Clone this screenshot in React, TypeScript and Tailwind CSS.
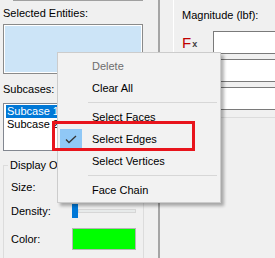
import React from 'react';

const Slider = () => (
  <div className="flex items-center w-[64px] h-[14px]">
    <div className="w-[6px] h-[14px] bg-[#0078d7]" />
    <div className="flex-1 h-[4px] bg-[#e7eaea] border border-[#d6d6d6]" />
  </div>
);

const ForceRow = ({ axis }: { axis: string }) => (
  <div className="flex items-center h-[23px]">
    <div className="w-[31px] flex items-end leading-none">
      <span className="text-[15px] text-[#c00000]">F</span>
      <span className="text-[9px] font-bold text-[#404040] ml-[1px] mb-[1px]">{axis}</span>
    </div>
    <div className="w-[80px] h-[23px] bg-white border border-[#7a7a7a]" />
  </div>
);

const MenuItem = ({ label, disabled, checked }: { label: string; disabled?: boolean; checked?: boolean }) => (
  <div className={`flex items-center h-[22px] ${disabled ? 'text-[#6d6d6d]' : 'text-black'}`}>
    <div className={`ml-[2px] w-[22px] h-[21px] flex items-center justify-center ${checked ? 'bg-[#90c8f6]' : ''}`}>
      {checked && (
        <svg width="12" height="9" viewBox="0 0 12 9">
          <polyline points="1,4.5 4,7.5 11,1" fill="none" stroke="#333" strokeWidth="1.3" />
        </svg>
      )}
    </div>
    <span className="ml-[10px]">{label}</span>
  </div>
);

const Separator = () => (
  <div className="h-[7px] flex items-center pl-[30px] pr-[3px]">
    <div className="h-px w-full bg-[#d7d7d7]" />
  </div>
);

export default function App() {
  return (
    <div className="relative w-[275px] h-[258px] overflow-hidden bg-[#f0f0f0] flex items-start font-['Liberation_Sans',Arial,sans-serif] text-[11px] text-black">
      {/* panneau gauche */}
      <div className="w-[160px] h-[258px] shrink-0 border-r-2 border-[#a5a5a5]">
        <div className="ml-[13px] w-[130px] h-px bg-[#a0a0a0]" />
        <div className="pl-[3px] mt-[5px] leading-[15px]">Selected Entities:</div>
        <div className="ml-[3px] mt-[3px] w-[140px] h-[50px] border border-[#8a8a8a] bg-[#cce4f7] shadow-[inset_0_0_0_1px_#fff]" />

        <div className="pl-[3px] mt-[8px] leading-[15px]">Subcases:</div>
        <div className="ml-[3px] mt-[6px] w-[140px] h-[48px] border border-[#828790] bg-white pt-px px-[2px]">
          <div className="h-[13px] leading-[13px] pl-px bg-[#0078d7] text-white">Subcase 1</div>
          <div className="h-[13px] leading-[13px] pl-px">Subcase 2</div>
        </div>

        <fieldset className="ml-[3px] mt-[7px] w-[141px] border border-[#dcdcdc] pl-[7px] pt-[2px]">
          <legend className="ml-[-3px] px-[2px] leading-[15px]">Display Options</legend>
          <div className="flex items-center h-[24px]">
            <span className="w-[61px]">Size:</span>
            <Slider />
          </div>
          <div className="flex items-center h-[24px]">
            <span className="w-[61px]">Density:</span>
            <Slider />
          </div>
          <div className="flex items-center h-[22px] mt-[5px]">
            <span className="w-[61px]">Color:</span>
            <div className="w-[64px] h-[22px] border border-[#b4b4b4] bg-[#00ff00]" />
          </div>
          <div className="h-[20px]" />
        </fieldset>
      </div>

      {/* panneau droit */}
      <div className="ml-[13px] h-[200px] flex-1 border-l border-white pl-[8px] flex flex-col">
        <div className="pt-[8px] leading-[15px]">Magnitude (lbf):</div>
        <div className="mt-[8px] flex flex-col gap-[5px]">
          <ForceRow axis="x" />
          <ForceRow axis="y" />
          <ForceRow axis="z" />
        </div>
        <div className="mt-[7px] h-px bg-[#dcdcdc]" />
      </div>

      {/* menu contextuel */}
      <div className="absolute left-[57px] top-[52px] w-[164px] border border-[#cccccc] bg-[#f2f2f2] pt-[2px] pb-px shadow-[3px_3px_3px_rgba(0,0,0,0.3)] text-[11px]">
        <MenuItem label="Delete" disabled />
        <MenuItem label="Clear All" />
        <Separator />
        <MenuItem label="Select Faces" />
        <MenuItem label="Select Edges" checked />
        <MenuItem label="Select Vertices" />
        <Separator />
        <MenuItem label="Face Chain" />
      </div>

      {/* annotation */}
      <div className="absolute left-[52px] top-[121px] w-[143px] h-[30px] border-[3px] border-[#e8141c]" />
    </div>
  );
}
